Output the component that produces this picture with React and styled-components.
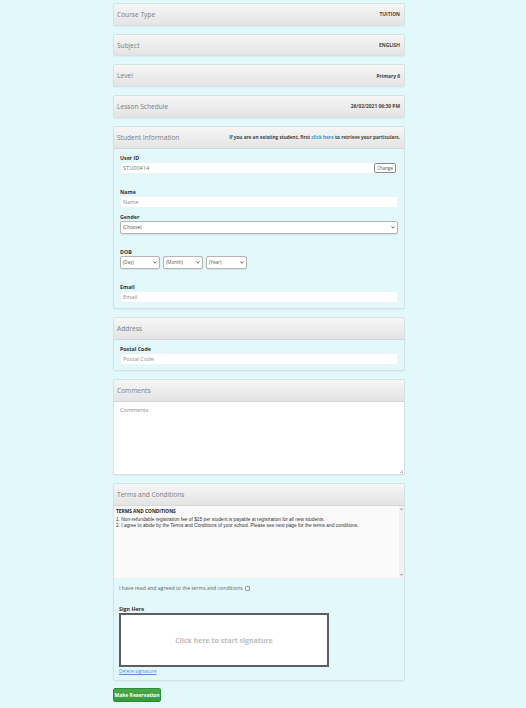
import React from 'react';
import styled, { createGlobalStyle } from 'styled-components';

const GlobalStyle = createGlobalStyle`
  html, body {
    margin: 0;
    padding: 0;
    background: #e3f8fa;
  }
  body {
    font-family: "Open Sans", "Liberation Sans", sans-serif;
  }
`;

const Page = styled.div`
  width: 526px;
  min-height: 708px;
  display: flex;
  justify-content: center;
  padding: 3px 8px 8px 0;
  box-sizing: border-box;
`;

const Column = styled.div`
  width: 292px;
  display: flex;
  flex-direction: column;
  gap: 8px;
`;

const Panel = styled.section`
  border: 1px solid #d3e3e5;
  border-radius: 2px;
  background: #e3f8fa;
  box-shadow: 0 1px 1px rgba(0, 0, 0, 0.04);
  overflow: hidden;
`;

const PanelHeader = styled.header`
  height: ${p => (p.$open ? '21px' : '20.7px')};
  display: flex;
  align-items: center;
  justify-content: space-between;
  padding: 0 4px 0 3px;
  background: linear-gradient(#f6f6f6, #e4e4e4);
  border-bottom: ${p => (p.$open ? '1px solid #d6d6d6' : 'none')};
`;

const PanelTitle = styled.h3`
  margin: 0;
  font-size: 6.6px;
  font-weight: 400;
  color: #7d7d7d;
`;

const PanelValue = styled.span`
  font-size: 4.9px;
  font-weight: 700;
  color: #444;
`;

const HeaderNote = styled.span`
  font-size: 4.7px;
  font-weight: 700;
  color: #444;
`;

const Link = styled.a`
  color: #3f8fd2;
  text-decoration: none;
`;

const PanelBody = styled.div`
  padding: 6px 6px 5px;
  display: flex;
  flex-direction: column;
`;

const Group = styled.div`
  display: flex;
  flex-direction: column;
  gap: 1px;
  margin-bottom: ${p => (p.$last ? '0' : p.$spaced ? '15px' : '6px')};
`;

const Label = styled.label`
  font-size: 5.3px;
  line-height: 6px;
  font-weight: 700;
  color: #333;
`;

const Input = styled.input`
  height: 12px;
  box-sizing: border-box;
  border: 1px solid #eef4f5;
  border-radius: 2px;
  background: #fff;
  padding: 0 2px;
  font-family: inherit;
  font-size: 5.6px;
  color: #777;
  outline: none;
  &::placeholder {
    color: #909090;
  }
`;

const InputRow = styled.div`
  height: 12px;
  box-sizing: border-box;
  border: 1px solid #eef4f5;
  border-radius: 2px;
  background: #fff;
  padding: 0 1px 0 2px;
  display: flex;
  align-items: center;
  justify-content: space-between;
  font-size: 5.6px;
  color: #777;
`;

const SmallButton = styled.button`
  height: 10px;
  padding: 0 2px;
  border: 1px solid #8a8a8a;
  border-radius: 2px;
  background: #fff;
  font-family: inherit;
  font-size: 4.5px;
  color: #555;
  line-height: 1;
`;

const SelectRow = styled.div`
  display: flex;
  gap: 3px;
`;

const Select = styled.div`
  width: ${p => p.$width || 'auto'};
  height: 13px;
  box-sizing: border-box;
  border: 1px solid #b5b5b5;
  border-radius: 2px;
  background: #fff;
  display: flex;
  align-items: center;
  justify-content: space-between;
  padding: 0 2px;
  font-size: 4.6px;
  color: #555;
  box-shadow: 0 1px 1px rgba(0, 0, 0, 0.08);
`;

const Chevron = () => (
  <svg width="4" height="3" viewBox="0 0 8 6">
    <path d="M1 1 L4 4.5 L7 1" fill="none" stroke="#444" strokeWidth="1.6" />
  </svg>
);

const CommentsWrap = styled.div`
  position: relative;
  background: #fff;
  &::after {
    content: '';
    position: absolute;
    right: 1px;
    bottom: 1px;
    width: 3px;
    height: 3px;
    background: linear-gradient(135deg, transparent 45%, #aaa 45%, #aaa 55%, transparent 55%, transparent 75%, #aaa 75%);
  }
`;

const Comments = styled.textarea`
  display: block;
  width: 100%;
  height: 72.5px;
  box-sizing: border-box;
  border: none;
  background: #fff;
  padding: 4px 6px;
  font-family: inherit;
  font-size: 5.6px;
  resize: none;
  outline: none;
  &::placeholder {
    color: #8a8a8a;
  }
`;

const TermsBox = styled.div`
  height: 72px;
  display: flex;
  background: #fafafa;
`;

const TermsText = styled.div`
  flex: 1;
  padding: 2px 2px;
  font-family: "Liberation Sans", Arial, sans-serif;
  font-size: 4.8px;
  line-height: 6px;
  color: #333;
`;

const TermsHeading = styled.div`
  font-family: "Open Sans", sans-serif;
  font-weight: 700;
  font-size: 4.8px;
  line-height: 6px;
  color: #222;
  margin-bottom: 3px;
`;

const Scrollbar = styled.div`
  width: 5px;
  background: #f1f1f1;
  display: flex;
  flex-direction: column;
  justify-content: space-between;
  align-items: center;
  padding: 2px 0;
  box-sizing: border-box;
`;

const Arrow = ({ down }) => (
  <svg width="3" height="2" viewBox="0 0 6 4">
    <path d={down ? 'M0 0 L6 0 L3 4 Z' : 'M0 4 L6 4 L3 0 Z'} fill="#a3a3a3" />
  </svg>
);

const AgreeRow = styled.div`
  display: flex;
  align-items: center;
  gap: 2px;
  padding: 7px 5px 0;
  font-size: 5.2px;
  line-height: 6px;
  color: #666;
`;

const Checkbox = styled.input`
  appearance: none;
  width: 5px;
  height: 5px;
  margin: 1px 0 0;
  border: 1px solid #9a9a9a;
  border-radius: 1px;
  background: #fff;
  box-sizing: border-box;
`;

const SignSection = styled.div`
  padding: 15px 5px 6px;
  display: flex;
  flex-direction: column;
  align-items: flex-start;
  gap: 1px;
`;

const SignPad = styled.div`
  width: 210px;
  height: 54px;
  box-sizing: border-box;
  border: 2px solid #5e5e5e;
  background: #fff;
  display: flex;
  align-items: center;
  justify-content: center;
  font-size: 7px;
  font-weight: 700;
  color: #bdbdbd;
  cursor: pointer;
`;

const DeleteLink = styled.a`
  font-size: 4.9px;
  line-height: 6px;
  color: #5a8de0;
  text-decoration: underline;
`;

const SubmitButton = styled.button`
  align-self: flex-start;
  width: 48px;
  height: 14px;
  padding: 0;
  border: 1px solid #2f8a33;
  border-radius: 2px;
  background: linear-gradient(#47a94a, #379a3b);
  color: #fff;
  font-family: inherit;
  font-size: 5px;
  font-weight: 700;
  margin-top: -1px;
`;

const SummaryPanel = ({ title, value }) => (
  <Panel>
    <PanelHeader>
      <PanelTitle>{title}</PanelTitle>
      <PanelValue>{value}</PanelValue>
    </PanelHeader>
  </Panel>
);

export default function App() {
  return (
    <>
      <GlobalStyle />
      <Page>
        <Column>
          <SummaryPanel title="Course Type" value="TUITION" />
          <SummaryPanel title="Subject" value="ENGLISH" />
          <SummaryPanel title="Level" value="Primary 6" />
          <SummaryPanel title="Lesson Schedule" value="26/02/2021 06:30 PM" />

          <Panel>
            <PanelHeader $open>
              <PanelTitle>Student Information</PanelTitle>
              <HeaderNote>
                If you are an existing student, first <Link href="#">click here</Link> to retrieve your particulars.
              </HeaderNote>
            </PanelHeader>
            <PanelBody>
              <Group $spaced>
                <Label>User ID</Label>
                <InputRow>
                  <span>STU00414</span>
                  <SmallButton type="button">Change</SmallButton>
                </InputRow>
              </Group>
              <Group>
                <Label>Name</Label>
                <Input placeholder="Name" />
              </Group>
              <Group $spaced>
                <Label>Gender</Label>
                <Select>
                  <span>(Choose)</span>
                  <Chevron />
                </Select>
              </Group>
              <Group $spaced>
                <Label>DOB</Label>
                <SelectRow>
                  <Select $width="40px">
                    <span>(Day)</span>
                    <Chevron />
                  </Select>
                  <Select $width="40px">
                    <span>(Month)</span>
                    <Chevron />
                  </Select>
                  <Select $width="41px">
                    <span>(Year)</span>
                    <Chevron />
                  </Select>
                </SelectRow>
              </Group>
              <Group $last>
                <Label>Email</Label>
                <Input placeholder="Email" />
              </Group>
            </PanelBody>
          </Panel>

          <Panel>
            <PanelHeader $open>
              <PanelTitle>Address</PanelTitle>
            </PanelHeader>
            <PanelBody>
              <Group $last>
                <Label>Postal Code</Label>
                <Input placeholder="Postal Code" />
              </Group>
            </PanelBody>
          </Panel>

          <Panel>
            <PanelHeader $open>
              <PanelTitle>Comments</PanelTitle>
            </PanelHeader>
            <CommentsWrap>
              <Comments placeholder="Comments" />
            </CommentsWrap>
          </Panel>

          <Panel>
            <PanelHeader $open>
              <PanelTitle>Terms and Conditions</PanelTitle>
            </PanelHeader>
            <TermsBox>
              <TermsText>
                <TermsHeading>TERMS AND CONDITIONS</TermsHeading>
                <div>1. Non-refundable registration fee of $15 per student is payable at registration for all new students.</div>
                <div>2. I agree to abide by the Terms and Conditions of your school. Please see next page for the terms and conditions.</div>
              </TermsText>
              <Scrollbar>
                <Arrow />
                <Arrow down />
              </Scrollbar>
            </TermsBox>
            <AgreeRow>
              <span>I have read and agreed to the terms and conditions</span>
              <Checkbox type="checkbox" />
            </AgreeRow>
            <SignSection>
              <Label>Sign Here</Label>
              <SignPad>Click here to start signature</SignPad>
              <DeleteLink href="#">Delete signature</DeleteLink>
            </SignSection>
          </Panel>

          <SubmitButton type="button">Make Reservation</SubmitButton>
        </Column>
      </Page>
    </>
  );
}
